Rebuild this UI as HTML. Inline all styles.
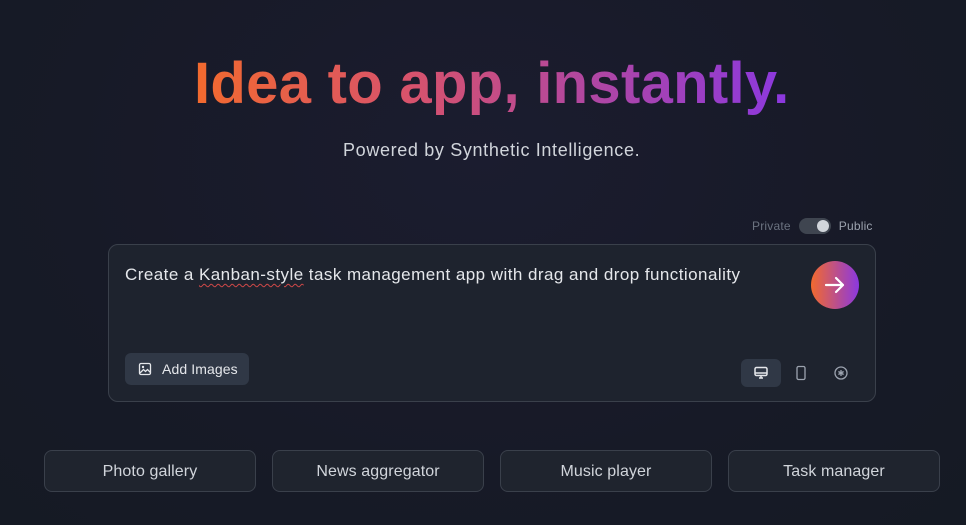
<!DOCTYPE html>
<html><head><style>
*{box-sizing:border-box;margin:0;padding:0}
body{width:966px;height:525px;overflow:hidden;background:radial-gradient(ellipse at 50% 30%,#1b1c2f 0%,#171a27 60%,#151a24 100%);font-family:"Liberation Sans",sans-serif;position:relative;color:#e5e7eb}
h1{position:absolute;top:49px;left:194px;font-size:58px;font-weight:bold;line-height:70px;letter-spacing:0.3px;white-space:nowrap;background:linear-gradient(90deg,#f26a2e 0%,#d9536a 35%,#b2479f 65%,#8b38e0 100%);-webkit-background-clip:text;background-clip:text;color:transparent}
.sub{position:absolute;top:140px;left:343px;white-space:nowrap;font-size:18px;letter-spacing:0.65px;color:#d1d5db}
.tog{position:absolute;top:218px;left:752px;font-size:12px;letter-spacing:0.2px;color:#6b7280;display:flex;align-items:center}
.sw{width:32px;height:16px;border-radius:8px;background:#3f4550;margin:0 8px 0 8px;position:relative}
.sw:after{content:"";position:absolute;right:2px;top:2px;width:12px;height:12px;border-radius:6px;background:#d1d5db}
.tog .pub{color:#9ca3af}
.box{position:absolute;left:108px;top:244px;width:768px;height:158px;border:1px solid #3a404b;border-radius:10px;background:#1e232e}
.txt{position:absolute;left:16px;top:20px;font-size:17px;letter-spacing:0.45px;color:#e5e7eb}
.u{text-decoration:underline wavy #d04848;text-decoration-thickness:1px;text-underline-offset:3px}
.go{position:absolute;left:702px;top:16px;width:48px;height:48px;border-radius:24px;background:linear-gradient(90deg,#f26a2e,#8b38e0)}
.add{position:absolute;left:16px;top:108px;width:124px;height:32px;border-radius:6px;background:#303846;font-size:14px;letter-spacing:0.1px;color:#e5e7eb;display:flex;align-items:center;padding-left:13px}
.dev{position:absolute;top:114px;width:40px;height:28px;border-radius:6px;display:flex;align-items:center;justify-content:center}
.btn{position:absolute;top:450px;width:212px;height:42px;border:1px solid #3a404b;border-radius:8px;background:#1f242e;font-size:16px;letter-spacing:0.1px;color:#d1d5db;display:flex;align-items:center;justify-content:center;padding-top:2px}
</style></head><body>
<h1>Idea to app, instantly.</h1>
<div class="sub">Powered by Synthetic Intelligence.</div>
<div class="tog">Private<div class="sw"></div><span class="pub">Public</span></div>
<div class="box">
<div class="txt">Create a <span class="u">Kanban-style</span> task management app with drag and drop functionality</div>
<div class="go"><svg width="48" height="48" viewBox="0 0 48 48"><path d="M15 24h17M25 17l7 7-7 7" stroke="#fff" stroke-width="2.2" fill="none" stroke-linecap="round" stroke-linejoin="round"/></svg></div>
<div class="add"><svg width="14" height="14" viewBox="0 0 14 14" style="margin-right:10px"><rect x="1.5" y="1.5" width="11" height="11" rx="1.5" fill="none" stroke="#e5e7eb" stroke-width="1.3"/><circle cx="5" cy="5" r="1.2" fill="#e5e7eb"/><path d="M2 11l3.5-3.5 2 2 2-2 3 3" fill="none" stroke="#e5e7eb" stroke-width="1.3"/></svg>Add Images</div>
<div class="dev" style="left:632px;background:#303846"><svg width="16" height="16" viewBox="0 0 16 16"><rect x="2" y="2.5" width="12" height="8" rx="1.5" fill="none" stroke="#e5e7eb" stroke-width="1.5"/><path d="M2 8h12M6 13h4M8 10.5v2.5" stroke="#e5e7eb" stroke-width="1.5"/></svg></div>
<div class="dev" style="left:672px"><svg width="16" height="16" viewBox="0 0 16 16"><rect x="4" y="1.5" width="8" height="13" rx="1.5" fill="none" stroke="#9ca3af" stroke-width="1.3"/></svg></div>
<div class="dev" style="left:712px"><svg width="16" height="16" viewBox="0 0 16 16"><circle cx="8" cy="8" r="6" fill="none" stroke="#9ca3af" stroke-width="1.3"/><path d="M8 5v6M5.4 6.5l5.2 3M5.4 9.5l5.2-3" stroke="#9ca3af" stroke-width="1.3"/></svg></div>
</div>
<div class="btn" style="left:44px">Photo gallery</div>
<div class="btn" style="left:272px">News aggregator</div>
<div class="btn" style="left:500px">Music player</div>
<div class="btn" style="left:728px">Task manager</div>
</body></html>
